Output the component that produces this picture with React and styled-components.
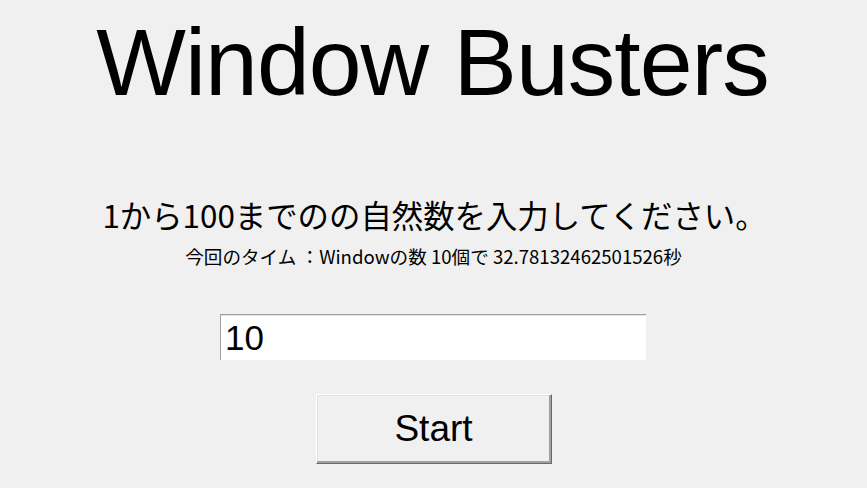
import React from "react";
import styled, { createGlobalStyle } from "styled-components";

const Global = createGlobalStyle`
  html, body { margin: 0; padding: 0; background: #f0f0f0; }
  body { font-family: "Liberation Sans", Arial, sans-serif; color: #000; }
`;

const Page = styled.main`
  width: 867px;
  height: 488px;
  display: flex;
  flex-direction: column;
  align-items: center;
  overflow: hidden;
`;

const Title = styled.h1`
  margin: 15px 0 0 -2px;
  font-family: "Liberation Sans", Arial, sans-serif;
  font-weight: 400;
  font-size: 95px;
  line-height: 95px;
  letter-spacing: -1px;
  white-space: nowrap;
`;

const Prompt = styled.p`
  margin: ${(p) => p.$top}px 0 0 ${(p) => p.$shift}px;
  font-family: "Noto Sans CJK JP", "Liberation Sans", sans-serif;
  font-size: ${(p) => p.$size}px;
  line-height: ${(p) => p.$size}px;
  white-space: nowrap;
`;

const Field = styled.input`
  box-sizing: border-box;
  margin: 48px 0 0 -1px;
  width: 426px;
  height: 46px;
  padding: 0 0 0 4px;
  background: #fff;
  border: none;
  border-top: 1px solid #a0a0a0;
  border-left: 1px solid #a0a0a0;
  box-shadow: inset 0 1px #e3e3e3;
  font-family: "Liberation Sans", Arial, sans-serif;
  font-size: 35px;
  color: #000;
  outline: none;
`;

const StartButton = styled.button`
  box-sizing: border-box;
  margin-top: 34px;
  width: 236px;
  height: 70px;
  background: #f0f0f0;
  border: 1px solid;
  border-color: #fff #696969 #696969 #fff;
  box-shadow: inset -2px -2px #a0a0a0, inset 1px 1px #e3e3e3;
  font-family: "Liberation Sans", Arial, sans-serif;
  font-size: 37px;
  color: #000;
  padding: 0;
`;

export default function App() {
  return (
    <>
      <Global />
      <Page>
        <Title>Window Busters</Title>
        <Prompt $top={89} $size={31.4} $shift={2}>
          1から100までのの自然数を入力してください。
        </Prompt>
        <Prompt $top={17} $size={18.6} $shift={0}>
          今回のタイム ：Windowの数 10個で 32.78132462501526秒
        </Prompt>
        <Field defaultValue="10" />
        <StartButton>Start</StartButton>
      </Page>
    </>
  );
}
